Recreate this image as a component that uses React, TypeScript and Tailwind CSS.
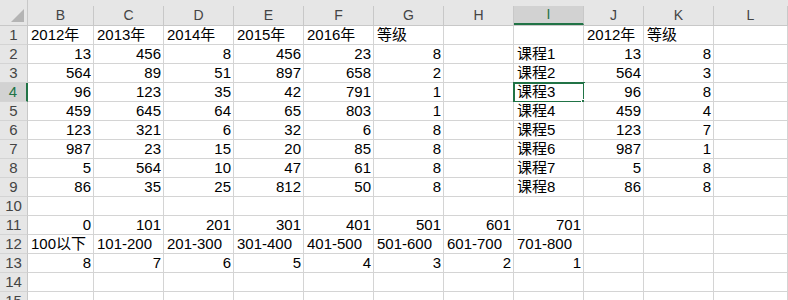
const cols = ['B', 'C', 'D', 'E', 'F', 'G', 'H', 'I', 'J', 'K', 'L'];

type Cell = string | number | null;

const rows: Cell[][] = [
  ['2012年', '2013年', '2014年', '2015年', '2016年', '等级', null, null, '2012年', '等级', null],
  [13, 456, 8, 456, 23, 8, null, '课程1', 13, 8, null],
  [564, 89, 51, 897, 658, 2, null, '课程2', 564, 3, null],
  [96, 123, 35, 42, 791, 1, null, '课程3', 96, 8, null],
  [459, 645, 64, 65, 803, 1, null, '课程4', 459, 4, null],
  [123, 321, 6, 32, 6, 8, null, '课程5', 123, 7, null],
  [987, 23, 15, 20, 85, 8, null, '课程6', 987, 1, null],
  [5, 564, 10, 47, 61, 8, null, '课程7', 5, 8, null],
  [86, 35, 25, 812, 50, 8, null, '课程8', 86, 8, null],
  [null, null, null, null, null, null, null, null, null, null, null],
  [0, 101, 201, 301, 401, 501, 601, 701, null, null, null],
  ['100以下', '101-200', '201-300', '301-400', '401-500', '501-600', '601-700', '701-800', null, null, null],
  [8, 7, 6, 5, 4, 3, 2, 1, null, null, null],
  [null, null, null, null, null, null, null, null, null, null, null],
  [null, null, null, null, null, null, null, null, null, null, null],
];

const font = { fontFamily: '"Liberation Sans", "Noto Sans CJK SC", sans-serif' };

function ColHeader({ label, active }: { label: string; active: boolean }) {
  return (
    <div className="h-[26px] bg-[#e6e6e6] border-b border-[#c8c8c8] flex flex-col justify-end">
      <div
        className={
          active
            ? 'h-[19px] border-r border-[#c8c8c8] bg-[#d2d2d2] border-b-2 border-b-[#217346] flex items-center justify-center text-[14px] text-[#217346]'
            : 'h-[19px] border-r border-[#c8c8c8] flex items-center justify-center text-[14px] text-[#444444]'
        }
      >
        {label}
      </div>
    </div>
  );
}

function RowHeader({ n, active }: { n: number; active: boolean }) {
  return (
    <div
      className={
        active
          ? 'h-[19px] bg-[#d2d2d2] border-b border-[#d4d4d4] border-r-2 border-r-[#217346] flex items-end justify-center text-[15px] leading-[18px] text-[#217346]'
          : 'h-[19px] bg-[#e6e6e6] border-b border-[#d4d4d4] border-r border-r-[#c8c8c8] flex items-end justify-center text-[15px] leading-[18px] text-[#444444]'
      }
    >
      {n}
    </div>
  );
}

function DataCell({ value, selected }: { value: Cell; selected: boolean }) {
  const isNum = typeof value === 'number';
  return (
    <div
      className={
        isNum
          ? 'relative h-[19px] border-r border-b border-[#d4d4d4] bg-white flex items-end justify-end pr-[2px] text-[15px] leading-[18px] text-black whitespace-nowrap'
          : 'relative h-[19px] border-r border-b border-[#d4d4d4] bg-white flex items-end justify-start pl-[3px] text-[15px] leading-[18px] text-black whitespace-nowrap'
      }
    >
      {value}
      {selected && (
        <div className="absolute -left-[1px] -top-[1px] w-[72px] h-[21px] border-2 border-[#217346]">
          <div className="absolute -right-[4px] -bottom-[4px] w-[6px] h-[6px] bg-[#217346] border border-white" />
        </div>
      )}
    </div>
  );
}

export default function App() {
  return (
    <div className="w-[788px] h-[300px] overflow-hidden bg-white" style={font}>
      <div className="grid grid-cols-[28px_66px_70px_70px_70px_70px_70px_70px_70px_60px_70px_74px]">
        <div className="relative h-[26px] bg-[#e6e6e6] border-b border-r border-[#c8c8c8]">
          <div className="absolute right-[3px] bottom-[3px] w-0 h-0 border-l-[13px] border-l-transparent border-b-[13px] border-b-[#b4b4b4]" />
        </div>
        {cols.map((c) => (
          <ColHeader key={c} label={c} active={c === 'I'} />
        ))}
        {rows.map((r, i) => (
          <div key={i} className="contents">
            <RowHeader n={i + 1} active={i === 3} />
            {r.map((v, j) => (
              <DataCell key={j} value={v} selected={i === 3 && j === 7} />
            ))}
          </div>
        ))}
      </div>
    </div>
  );
}
